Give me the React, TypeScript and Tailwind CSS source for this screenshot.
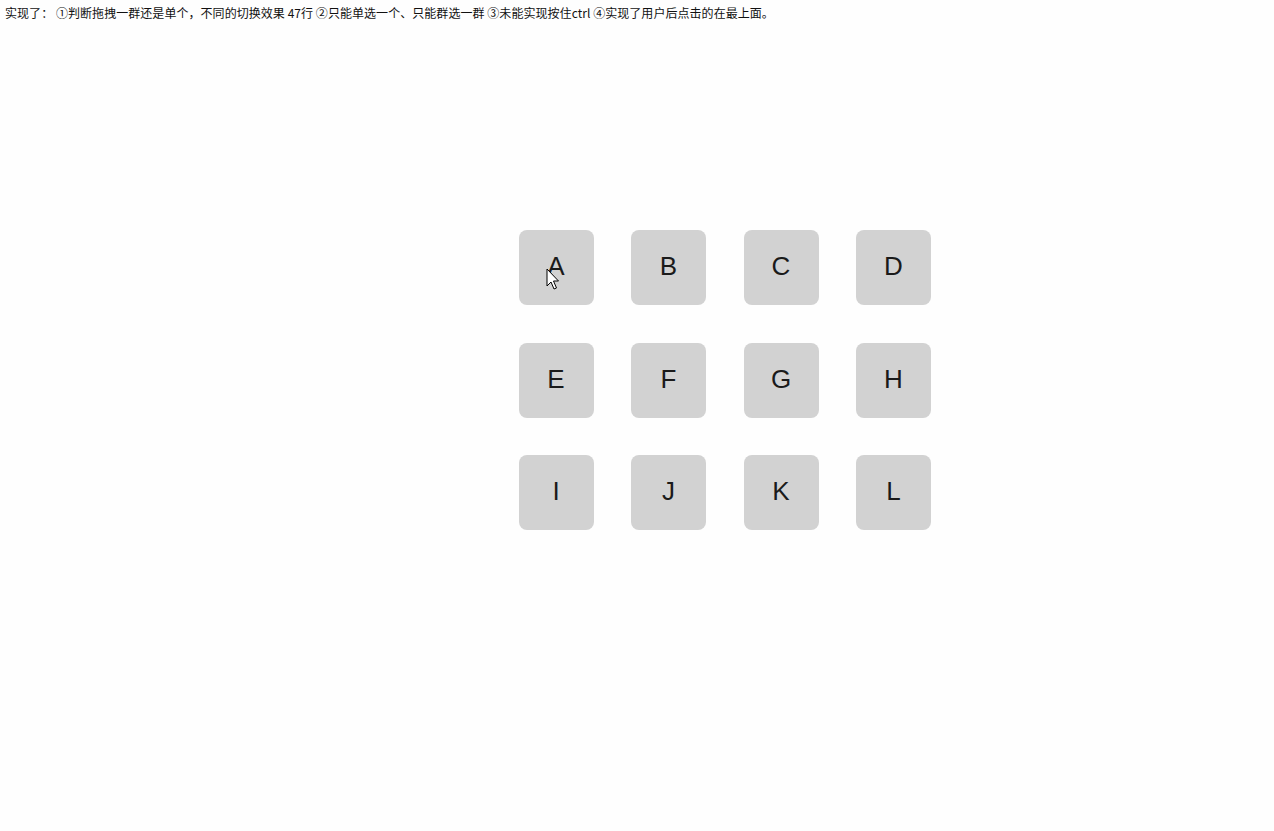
import React from "react";

const letters = ["A", "B", "C", "D", "E", "F", "G", "H", "I", "J", "K", "L"];

export default function App() {
  return (
    <div className="relative min-h-[831px] w-full bg-[#fefefe] text-black">
      <div className="px-[5px] pt-[5px] text-[12px] leading-[16px] tracking-[0.05px] text-[#111] font-['Microsoft_YaHei','Noto_Sans_CJK_SC',sans-serif]">
        实现了： ①判断拖拽一群还是单个，不同的切换效果 47行 ②只能单选一个、只能群选一群 ③未能实现按住ctrl ④实现了用户后点击的在最上面。
      </div>
      <div className="pl-[518.5px] pt-[209px]">
        <div className="grid grid-cols-[repeat(4,75px)] gap-x-[37.5px] gap-y-[37.5px]">
          {letters.map((l) => (
            <div
              key={l}
              className="flex h-[75px] w-[75px] items-center justify-center rounded-[8px] bg-[#d2d2d2] pb-[2px] text-[26px] text-[#1a1a1a] font-['Liberation_Sans',Arial,sans-serif]"
            >
              {l}
            </div>
          ))}
        </div>
      </div>
      <svg
        className="absolute left-[546px] top-[268px]"
        width="14"
        height="24"
        viewBox="0 0 14 24"
      >
        <path
          d="M1 1 L1 18 L5 14 L8 21 L10.5 20 L7.5 13 L12.5 13 Z"
          fill="#fff"
          stroke="#000"
          strokeWidth="1"
          strokeLinejoin="miter"
        />
      </svg>
    </div>
  );
}
